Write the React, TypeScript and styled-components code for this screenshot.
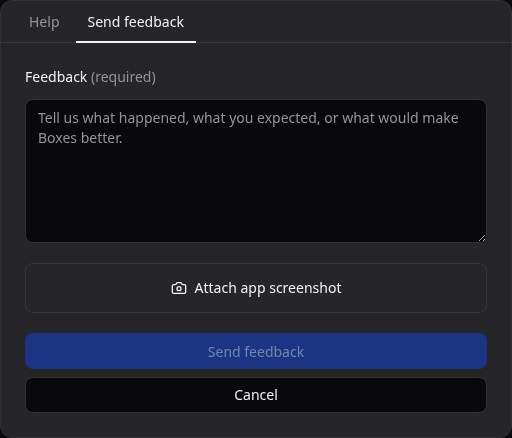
import { useState } from 'react';
import styled, { createGlobalStyle } from 'styled-components';
import { Camera } from 'lucide-react';

const GlobalStyle = createGlobalStyle`
  html, body {
    margin: 0;
    padding: 0;
    background: #0b0b0d;
  }
  * {
    box-sizing: border-box;
  }
`;

const Dialog = styled.div`
  width: 512px;
  height: 438px;
  display: flex;
  flex-direction: column;
  background: #262628;
  border: 1px solid #313134;
  border-radius: 12px;
  overflow: hidden;
  font-family: 'Noto Sans', sans-serif;
  color: #f0f0f2;
  will-change: transform;
`;

const TabBar = styled.div`
  display: flex;
  gap: 4px;
  height: 42px;
  padding: 0 16px;
  border-bottom: 1px solid #3a3a3d;
  flex-shrink: 0;
`;

const Tab = styled.button<{ $active: boolean }>`
  height: 42px;
  padding: 0 12px;
  border: none;
  border-bottom: 2px solid ${({ $active }) => ($active ? '#f4f4f5' : 'transparent')};
  background: none;
  font: inherit;
  font-size: 14px;
  color: ${({ $active }) => ($active ? '#f0f0f2' : '#939399')};
  cursor: pointer;
`;

const Form = styled.form`
  display: flex;
  flex-direction: column;
  padding: 24px 24px 0;
`;

const Label = styled.label`
  font-size: 14px;
  line-height: 20px;
  margin-bottom: 12px;
`;

const Hint = styled.span`
  color: #939399;
`;

const TextArea = styled.textarea`
  display: block;
  width: 100%;
  height: 144px;
  padding: 8px 12px;
  background: #09090b;
  border: 1px solid #313134;
  border-radius: 8px;
  outline: none;
  font: inherit;
  font-size: 14px;
  line-height: 20px;
  color: #f0f0f2;

  &::placeholder {
    color: #939399;
    opacity: 1;
  }
`;

const AttachButton = styled.button`
  display: flex;
  align-items: center;
  justify-content: center;
  gap: 8px;
  height: 50px;
  margin-top: 20px;
  background: transparent;
  border: 1px solid #38383b;
  border-radius: 8px;
  font: inherit;
  font-size: 14px;
  line-height: 18px;
  color: #f0f0f2;
  cursor: pointer;
`;

const SubmitButton = styled.button`
  height: 36px;
  margin-top: 20px;
  background: #1b3584;
  border: none;
  border-radius: 8px;
  font: inherit;
  font-size: 14px;
  color: #7685a6;
`;

const CancelButton = styled.button`
  height: 36px;
  margin-top: 8px;
  background: #09090b;
  border: 1px solid #313134;
  border-radius: 8px;
  font: inherit;
  font-size: 14px;
  line-height: 18px;
  color: #f0f0f2;
  cursor: pointer;
`;

export default function App() {
  const [tab, setTab] = useState<'help' | 'feedback'>('feedback');

  return (
    <>
      <GlobalStyle />
      <Dialog>
        <TabBar>
          <Tab type="button" $active={tab === 'help'} onClick={() => setTab('help')}>
            Help
          </Tab>
          <Tab type="button" $active={tab === 'feedback'} onClick={() => setTab('feedback')}>
            Send feedback
          </Tab>
        </TabBar>
        <Form onSubmit={(e) => e.preventDefault()}>
          <Label htmlFor="feedback">
            Feedback <Hint>(required)</Hint>
          </Label>
          <TextArea
            id="feedback"
            placeholder="Tell us what happened, what you expected, or what would make Boxes better."
          />
          <AttachButton type="button">
            <Camera size={16} />
            Attach app screenshot
          </AttachButton>
          <SubmitButton type="submit" disabled>
            Send feedback
          </SubmitButton>
          <CancelButton type="button">Cancel</CancelButton>
        </Form>
      </Dialog>
    </>
  );
}
